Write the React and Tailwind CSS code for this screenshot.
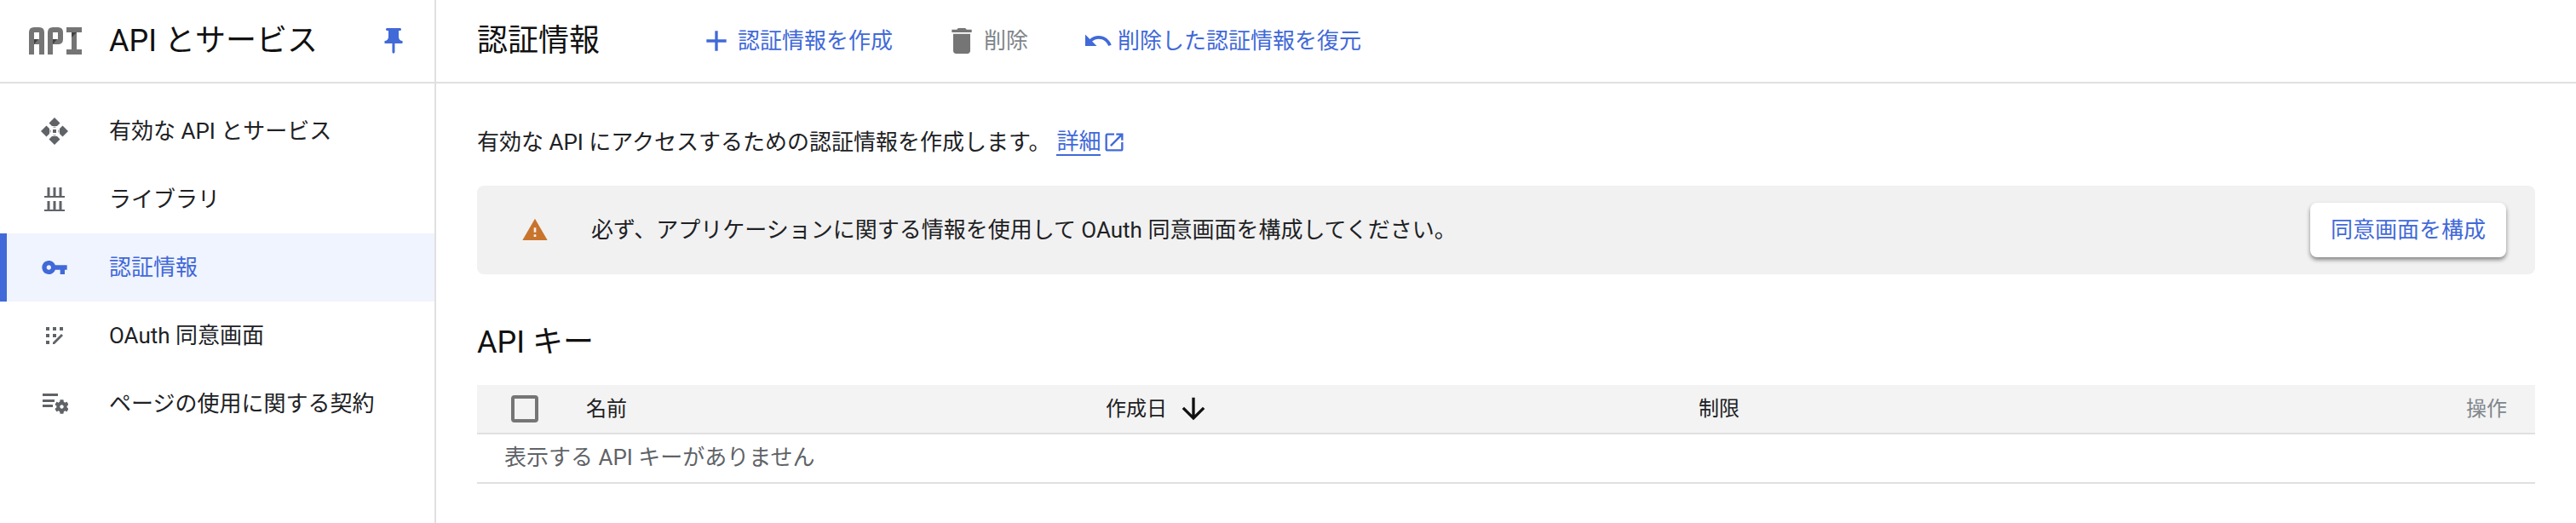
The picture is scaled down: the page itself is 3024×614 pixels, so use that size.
function MIcon({ d, className }) {
  return (
    <svg viewBox="0 0 24 24" className={className} fill="currentColor">
      <path d={d} />
    </svg>
  );
}

function ApiLogo() {
  return (
    <svg viewBox="0 0 62 32" className="w-[62px] h-[32px] shrink-0">
      <path fill="#757575" fillRule="evenodd" d="M0 6q0-6 6-6h6q6 0 6 6v26h-6V20H6v12H0zM6 6v8h6V6z" />
      <path fill="#424242" d="M6 14h5l-5 6z" />
      <path fill="#757575" fillRule="evenodd" d="M22 6q0-6 6-6h6q6 0 6 6v8q0 6-6 6h-6v12h-6zM28 6v8h6V6z" />
      <path fill="#424242" d="M28 14h5l-5 6z" />
      <path fill="#757575" d="M44 0h18v6h-6v20h6v6H44v-6h6V6h-6z" />
      <path fill="#424242" d="M50 6h6l-6 6z" />
    </svg>
  );
}

function ServicesIcon() {
  return (
    <svg viewBox="0 0 32 32" className="w-8 h-8" fill="#5f6368">
      <path d="M16 0l6.5 6.5-3.5 3.5h-6L9.5 6.5z" />
      <path d="M16 32l6.5-6.5-3.5-3.5h-6l-3.5 3.5z" />
      <path d="M0 16l6.5-6.5 3.5 3.5v6l-3.5 3.5z" />
      <path d="M32 16l-6.5-6.5-3.5 3.5v6l3.5 3.5z" />
      <rect x="14" y="14" width="4" height="4" />
      <rect x="14.5" y="10.5" width="3" height="1.5" fill="#b0b0b0" />
      <rect x="14.5" y="20" width="3" height="1.5" fill="#b0b0b0" />
      <rect x="10.5" y="14.5" width="1.5" height="3" fill="#b0b0b0" />
      <rect x="20" y="14.5" width="1.5" height="3" fill="#b0b0b0" />
    </svg>
  );
}

function LibraryIcon() {
  return (
    <svg viewBox="0 0 24 28" className="w-6 h-7" fill="#5f6368">
      <rect x="3.5" y="0" width="3" height="10" />
      <rect x="10.5" y="0" width="3" height="10" />
      <rect x="17.5" y="0" width="3" height="10" />
      <rect x="0" y="10" width="24" height="2" />
      <rect x="3.5" y="16" width="3" height="10" />
      <rect x="10.5" y="16" width="3" height="10" />
      <rect x="17.5" y="16" width="3" height="10" />
      <rect x="0" y="26" width="24" height="2" />
    </svg>
  );
}

function OauthIcon() {
  return (
    <svg viewBox="0 0 20 20" className="w-5 h-5" fill="#5f6368">
      <rect x="0" y="0" width="4" height="4" />
      <rect x="8" y="0" width="4" height="4" />
      <rect x="16" y="0" width="4" height="4" />
      <rect x="0" y="8" width="4" height="4" />
      <rect x="8" y="8" width="4" height="4" />
      <rect x="0" y="16" width="4" height="4" />
      <path d="M8 18l9-9 1-1 2 2-1 1-9 9H8z" />
    </svg>
  );
}

function TermsIcon() {
  return (
    <svg viewBox="0 0 32 24" className="w-8 h-6" fill="#5f6368">
      <rect x="2" y="0" width="18" height="3" />
      <rect x="2" y="7" width="14" height="3" />
      <rect x="2" y="13" width="12" height="3" />
      <g transform="translate(14.3 5.3) scale(0.85)">
        <path d="M19.14 12.94c.04-.3.06-.61.06-.94 0-.32-.02-.64-.07-.94l2.03-1.58c.18-.14.23-.41.12-.61l-1.92-3.32c-.12-.22-.37-.29-.59-.22l-2.39.96c-.5-.38-1.03-.7-1.62-.94l-.36-2.54c-.04-.24-.24-.41-.48-.41h-3.84c-.24 0-.43.17-.47.41l-.36 2.54c-.59.24-1.13.57-1.62.94l-2.39-.96c-.22-.08-.47 0-.59.22L2.74 8.87c-.12.21-.08.47.12.61l2.03 1.58c-.05.3-.09.63-.09.94s.02.64.07.94l-2.03 1.58c-.18.14-.23.41-.12.61l1.92 3.32c.12.22.37.29.59.22l2.39-.96c.5.38 1.03.7 1.62.94l.36 2.54c.05.24.24.41.48.41h3.84c.24 0 .44-.17.47-.41l.36-2.54c.59-.24 1.13-.56 1.62-.94l2.39.96c.22.08.47 0 .59-.22l1.92-3.32c.12-.22.07-.47-.12-.61l-2.01-1.58zM12 14.6c-1.43 0-2.6-1.17-2.6-2.6s1.17-2.6 2.6-2.6 2.6 1.17 2.6 2.6-1.17 2.6-2.6 2.6z" />
      </g>
    </svg>
  );
}

const navItems = [
  { label: "有効な API とサービス", icon: <ServicesIcon /> },
  { label: "ライブラリ", icon: <LibraryIcon /> },
  {
    label: "認証情報",
    active: true,
    icon: (
      <MIcon
        className="w-8 h-8 text-[#4169d8]"
        d="M12.65 10C11.83 7.67 9.61 6 7 6c-3.31 0-6 2.69-6 6s2.69 6 6 6c2.61 0 4.83-1.67 5.65-4H17v4h4v-4h2v-4H12.65zM7 14c-1.1 0-2-.9-2-2s.9-2 2-2 2 .9 2 2-.9 2-2 2z"
      />
    ),
  },
  { label: "OAuth 同意画面", icon: <OauthIcon /> },
  { label: "ページの使用に関する契約", icon: <TermsIcon /> },
];

function Sidebar() {
  return (
    <aside className="w-[512px] shrink-0 border-r-2 border-[#e0e0e0] h-[614px]">
      <div className="h-[98px] border-b-2 border-[#e0e0e0] flex items-center pl-[34px] pr-[30px]">
        <ApiLogo />
        <div className="ml-[32px] text-[36px] text-[#111] flex-1">API とサービス</div>
        <MIcon
          className="w-9 h-9 text-[#4169d8]"
          d="M16 9V4h1c.55 0 1-.45 1-1s-.45-1-1-1H7c-.55 0-1 .45-1 1s.45 1 1 1h1v5c0 1.66-1.34 3-3 3v2h5.97v7l1 1 1-1v-7H19v-2c-1.66 0-3-1.34-3-3z"
        />
      </div>
      <nav className="pt-4">
        {navItems.map((item) => (
          <div
            key={item.label}
            className={
              item.active
                ? "h-20 flex items-center bg-[#f0f4fe] border-l-8 border-[#4169d8] text-[#4169d8]"
                : "h-20 flex items-center border-l-8 border-transparent text-[#202124]"
            }
          >
            <div className="w-[64px] ml-[24px] flex items-center justify-center">{item.icon}</div>
            <span className="ml-[32px] text-[26px]">{item.label}</span>
          </div>
        ))}
      </nav>
    </aside>
  );
}

function Toolbar() {
  return (
    <div className="h-[98px] border-b-2 border-[#e0e0e0] flex items-center pl-[48px] text-[26px]">
      <h1 className="text-[36px] font-normal text-[#111] w-[261px]">認証情報</h1>
      <div className="flex items-center text-[#4169d8]">
        <MIcon className="w-10 h-10" d="M19 13h-6v6h-2v-6H5v-2h6V5h2v6h6v2z" />
        <span className="ml-[5px]">認証情報を作成</span>
      </div>
      <div className="flex items-center text-[#80868b] ml-[61px]">
        <MIcon className="w-10 h-10 text-[#757575]" d="M6 19c0 1.1.9 2 2 2h8c1.1 0 2-.9 2-2V7H6v12zM19 4h-3.5l-1-1h-5l-1 1H5v2h14V4z" />
        <span className="ml-[6px]">削除</span>
      </div>
      <div className="flex items-center text-[#4169d8] ml-[64px]">
        <MIcon className="w-9 h-9" d="M12.5 8c-2.65 0-5.05.99-6.9 2.6L2 7v9h9l-3.62-3.62c1.39-1.16 3.16-1.88 5.12-1.88 3.54 0 6.55 2.31 7.6 5.5l2.37-.78C21.08 11.03 17.15 8 12.5 8z" />
        <span className="ml-[5px]">削除した認証情報を復元</span>
      </div>
    </div>
  );
}

function Content() {
  return (
    <div className="px-[48px] text-[26px] text-[#202124]">
      <div className="h-[120px] pt-[18px] flex items-center">
        <span>有効な API にアクセスするための認証情報を作成します。</span>
        <span className="ml-[7px] text-[#4169d8] border-b-2 border-[#4169d8] leading-[30px]">詳細</span>
        <MIcon
          className="w-[28px] h-[28px] ml-[2px] text-[#4169d8]"
          d="M19 19H5V5h7V3H5c-1.11 0-2 .9-2 2v14c0 1.1.89 2 2 2h14c1.1 0 2-.9 2-2v-7h-2v7zM14 3v2h3.59l-9.83 9.83 1.41 1.41L19 6.41V10h2V3h-7z"
        />
      </div>

      <div className="h-[104px] bg-[#f1f1f1] rounded-lg flex items-center pl-[52px] pr-[34px]">
        <MIcon className="w-[32px] h-[32px] text-[#c9742d]" d="M1 21h22L12 2 1 21zm12-3h-2v-2h2v2zm0-4h-2v-4h2v4z" />
        <span className="ml-[50px] flex-1">必ず、アプリケーションに関する情報を使用して OAuth 同意画面を構成してください。</span>
        <button className="w-[230px] h-[64px] bg-white rounded-lg text-[#4169d8] text-[26px] shadow-[0_3px_5px_rgba(0,0,0,0.45)]">
          同意画面を構成
        </button>
      </div>

      <h2 className="mt-[56px] h-[48px] leading-[48px] text-[36px] font-normal text-[#111]">API キー</h2>

      <div className="mt-[26px] h-[58px] bg-[#f3f3f3] border-b-2 border-[#e0e0e0] grid grid-cols-[128px_610px_696px_1fr] items-center text-[24px]">
        <div className="pl-[40px]">
          <div className="w-[32px] h-[32px] border-4 border-[#757575] rounded" />
        </div>
        <div>名前</div>
        <div className="flex items-center">
          作成日
          <MIcon className="w-10 h-10 ml-[11px] text-[#111]" d="M20 12l-1.41-1.41L13 16.17V4h-2v12.17l-5.58-5.59L4 12l8 8 8-8z" />
        </div>
        <div className="flex justify-between pr-[33px]">
          <span>制限</span>
          <span className="text-[#80868b]">操作</span>
        </div>
      </div>
      <div className="h-[58px] pb-[2px] border-b-2 border-[#e0e0e0] flex items-center pl-[32px] text-[#5f6368]">
        表示する API キーがありません
      </div>
    </div>
  );
}

export default function App() {
  return (
    <div className="flex w-[3024px] h-[614px] bg-white overflow-hidden font-['Roboto','Noto_Sans_CJK_JP',sans-serif]">
      <Sidebar />
      <main className="flex-1">
        <Toolbar />
        <Content />
      </main>
    </div>
  );
}
